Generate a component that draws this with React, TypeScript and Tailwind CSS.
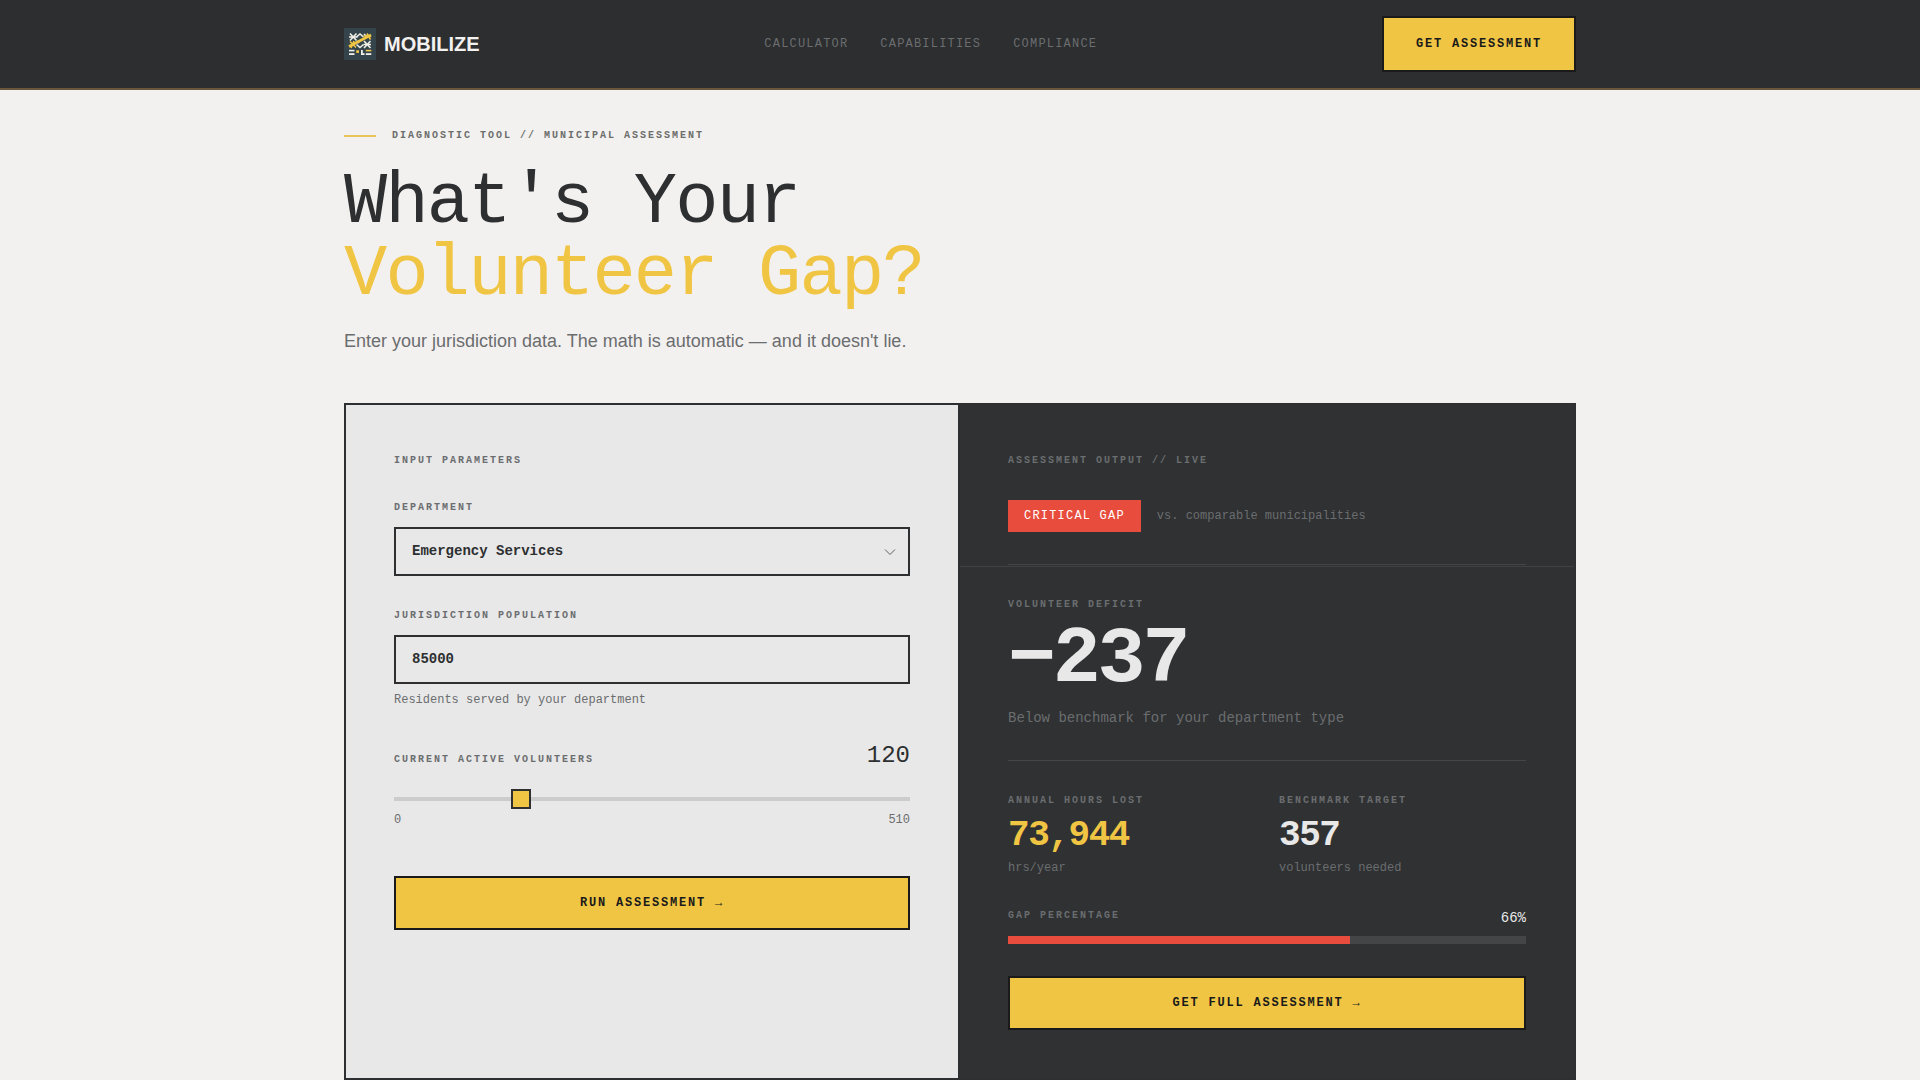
import { useState } from 'react';

const LABEL = 'font-bold text-[10px] leading-[15px] tracking-[0.2em] uppercase';
const BUTTON =
  'border-2 border-[#1a1a1a] bg-[#f0c544] font-bold text-xs tracking-[0.15em] uppercase text-[#1a1a1a] cursor-pointer hover:bg-[#f5d060]';

const DEPARTMENTS = ['Emergency Services', 'Parks & Recreation', 'Public Libraries', 'Public Health', 'Animal Services'];
const BENCHMARK_RATE = 0.0042;
const HOURS_PER_VOLUNTEER = 312;
const MAX_VOLUNTEERS = 510;

function Logo() {
  return (
    <svg className="size-8" viewBox="0 0 32 32" fill="none" aria-hidden="true">
      <rect width="32" height="32" fill="#34444a" />
      <g stroke="#f0efe8" strokeWidth="1.6">
        <path d="M5 9h8.5M6 5.5l6.5 7M12.5 5.5l-6.5 7" />
        <path d="M19.5 16.5H27M20 13l6.5 7M26.5 13L20 20" />
        <path d="M12.5 9l3.5-3 3.5 3M12.5 16.5l3.5 3 3.5-3M13 13l2 2" />
        <path d="M20 6l3 3" />
      </g>
      <g stroke="#f0c544" strokeWidth="2">
        <path strokeWidth="2.6" d="M5 18.5L27 7" />
        <path strokeWidth="1.6" d="M6 13.5l6 6M10 13l-3 7M23 5.5l3.5 6M19.5 8H27" />
      </g>
      <g fill="#f0efe8">
        <rect x="5" y="25.2" width="5.5" height="1.8" />
        <rect x="17" y="22" width="1.8" height="5" />
        <rect x="17" y="25.2" width="3.5" height="1.8" />
        <rect x="21.8" y="25.2" width="5.5" height="1.8" />
        <rect x="5" y="21.8" width="5.5" height="1.6" />
      </g>
      <g fill="#f0c544">
        <rect x="12.2" y="22.3" width="2.8" height="2.6" />
        <rect x="21.8" y="21.8" width="5.5" height="1.6" />
      </g>
    </svg>
  );
}

function Header() {
  return (
    <header className="fixed inset-x-0 top-0 z-50 border-b-2 border-[#6a563c] bg-[#2c2e30]">
      <div className="mx-auto flex max-w-7xl items-center justify-between px-6 py-4">
        <a href="#" className="flex items-center gap-2">
          <Logo />
          <span className="font-['Liberation_Sans',sans-serif] text-xl font-bold text-[#f3f1ef]">MOBILIZE</span>
        </a>
        <nav className="flex gap-8 text-xs tracking-[0.1em] uppercase text-[#6b6d6f]">
          <a href="#calculator" className="hover:text-[#f0c544]">Calculator</a>
          <a href="#capabilities" className="hover:text-[#f0c544]">Capabilities</a>
          <a href="#compliance" className="hover:text-[#f0c544]">Compliance</a>
        </nav>
        <button type="button" className={`${BUTTON} px-8 py-4 leading-5`}>Get Assessment</button>
      </div>
    </header>
  );
}

export default function App() {
  const [department, setDepartment] = useState(DEPARTMENTS[0]);
  const [population, setPopulation] = useState('85000');
  const [volunteers, setVolunteers] = useState(120);

  const target = Math.round(Number(population) * BENCHMARK_RATE);
  const deficit = Math.max(0, target - volunteers);
  const gapPct = target > 0 ? Math.round((deficit / target) * 100) : 0;
  const hoursLost = deficit * HOURS_PER_VOLUNTEER;

  return (
    <div className="min-h-screen bg-[#f3f1ef] font-['Liberation_Mono',monospace] text-[#2d2f31]">
      <Header />

      <main className="mx-auto max-w-7xl px-6 pt-32">
        <div className="flex items-center gap-4">
          <span className="h-0.5 w-8 bg-[#e8c35a]" />
          <span className={`${LABEL} text-[#6b6d6b]`}>Diagnostic Tool // Municipal Assessment</span>
        </div>
        <h1 className="mt-6 text-7xl leading-none tracking-tight">
          What's Your
          <span className="block text-[#f0c544]">Volunteer Gap?</span>
        </h1>
        <p className="mt-4 font-['Liberation_Sans',sans-serif] text-lg leading-7 text-[#6b6d6f]">
          Enter your jurisdiction data. The math is automatic — and it doesn't lie.
        </p>

        <section id="calculator" className="mt-12 grid grid-cols-2 border-2 border-[#2d2f31]">
          <form className="border-r-2 border-[#2d2f31] bg-[#e8e8e8] p-12" onSubmit={(e) => e.preventDefault()}>
            <h2 className={`${LABEL} text-[#6b6d6f]`}>Input Parameters</h2>

            <div className="mt-8">
              <label htmlFor="department" className={`${LABEL} block text-[#6b6d6f]`}>Department</label>
              <div className="relative mt-3">
                <select
                  id="department"
                  value={department}
                  onChange={(e) => setDepartment(e.target.value)}
                  className="block w-full appearance-none border-2 border-[#2d2f31] bg-transparent px-4 py-3 text-sm leading-[21px] font-bold"
                >
                  {DEPARTMENTS.map((d) => (
                    <option key={d}>{d}</option>
                  ))}
                </select>
                <svg
                  className="pointer-events-none absolute top-1/2 right-3.5 h-2 w-3 -translate-y-1/2"
                  viewBox="0 0 12 8"
                  fill="none"
                  stroke="#5f6163"
                  aria-hidden="true"
                >
                  <path d="M1 1.5l5 5 5-5" />
                </svg>
              </div>
            </div>

            <div className="mt-8">
              <label htmlFor="population" className={`${LABEL} block text-[#6b6d6f]`}>Jurisdiction Population</label>
              <input
                id="population"
                inputMode="numeric"
                value={population}
                onChange={(e) => setPopulation(e.target.value.replace(/\D/g, ''))}
                className="mt-3 block w-full border-2 border-[#2d2f31] bg-transparent px-4 py-3 text-sm leading-[21px] font-bold"
              />
              <p className="mt-2 text-xs text-[#6b6d6f]">Residents served by your department</p>
            </div>

            <div className="mt-8">
              <div className="flex items-baseline justify-between">
                <label htmlFor="volunteers" className={`${LABEL} text-[#6b6d6f]`}>Current Active Volunteers</label>
                <span className="text-2xl">{volunteers}</span>
              </div>
              <input
                id="volunteers"
                type="range"
                min={0}
                max={MAX_VOLUNTEERS}
                value={volunteers}
                onChange={(e) => setVolunteers(Number(e.target.value))}
                className="mt-4 block h-[22px] w-full cursor-pointer appearance-none bg-transparent [&::-webkit-slider-runnable-track]:h-1 [&::-webkit-slider-runnable-track]:bg-[#cccccc] [&::-webkit-slider-thumb]:-mt-2 [&::-webkit-slider-thumb]:size-5 [&::-webkit-slider-thumb]:appearance-none [&::-webkit-slider-thumb]:border-2 [&::-webkit-slider-thumb]:border-[#2d2f31] [&::-webkit-slider-thumb]:bg-[#f0c544]"
              />
              <div className="mt-0.5 flex justify-between text-xs text-[#6b6d6f]">
                <span>0</span>
                <span>{MAX_VOLUNTEERS}</span>
              </div>
            </div>

            <button type="submit" className={`${BUTTON} mt-12 w-full py-4 leading-[18px]`}>Run Assessment →</button>
          </form>

          <div className="relative bg-[#2f3133] p-12 text-[#6b6d6f]">
            <div className="absolute inset-x-0 top-[161px] h-px bg-[#3f4143]" />

            <h2 className={LABEL}>Assessment Output // Live</h2>
            <div className="mt-8 flex items-center gap-4 border-b border-[#434547] pb-8 text-xs">
              <span className="bg-[#e74c3c] px-4 py-2 tracking-[0.1em] uppercase text-white">Critical Gap</span>
              <span>vs. comparable municipalities</span>
            </div>

            <div className="border-b border-[#434547] py-8">
              <h3 className={LABEL}>Volunteer Deficit</h3>
              <div className="mt-2 text-[80px] leading-none font-bold tracking-[-0.04em] text-[#e8e8e8]">−{deficit}</div>
              <p className="mt-2 text-sm">Below benchmark for your department type</p>
            </div>

            <div className="mt-8 grid grid-cols-2 gap-6">
              <div>
                <h3 className={LABEL}>Annual Hours Lost</h3>
                <div className="mt-2 text-4xl font-bold tracking-[-0.04em] text-[#f0c544]">
                  {hoursLost.toLocaleString('en-US')}
                </div>
                <p className="mt-1 text-xs">hrs/year</p>
              </div>
              <div>
                <h3 className={LABEL}>Benchmark Target</h3>
                <div className="mt-2 text-4xl font-bold tracking-[-0.04em] text-[#e8e8e8]">{target}</div>
                <p className="mt-1 text-xs">volunteers needed</p>
              </div>
            </div>

            <div className="mt-8 flex justify-between">
              <h3 className={LABEL}>Gap Percentage</h3>
              <span className="text-sm text-[#e8e8e8]">{gapPct}%</span>
            </div>
            <div className="mt-2 h-2 bg-[#434547]">
              <div className="h-2 bg-[#e74c3c]" style={{ width: `${gapPct}%` }} />
            </div>

            <button type="button" className={`${BUTTON} mt-8 w-full py-4 leading-[18px]`}>Get Full Assessment →</button>
          </div>
        </section>
      </main>
    </div>
  );
}
